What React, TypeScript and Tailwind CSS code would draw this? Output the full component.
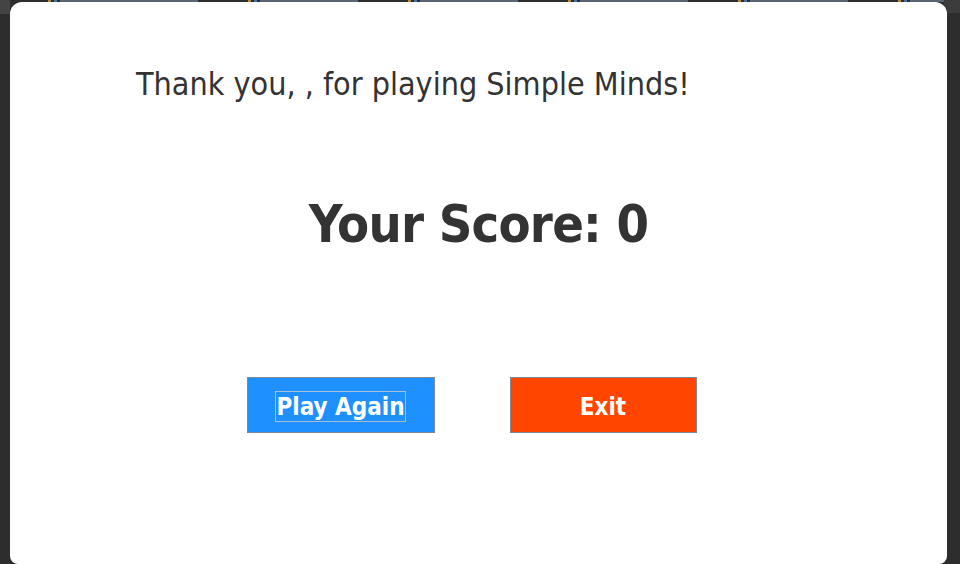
export default function App() {
  const tabs = [
    { x: 'w-[150px]' },
    { x: 'w-[110px]' },
    { x: 'w-[110px]' },
    { x: 'w-[120px]' },
    { x: 'w-[110px]' },
    { x: 'w-[110px]' },
    { x: 'w-[140px]' },
  ];
  return (
    <div className="relative h-[564px] w-[960px] overflow-hidden bg-[#2d2d2d]">
      <div className="absolute left-[48px] top-0 flex h-[3px] gap-[50px]">
        {tabs.map((t, i) => (
          <div key={i} className={`flex h-[3px] items-start gap-[3px] ${t.x}`}>
            <span className="h-[2px] w-[3px] bg-[#b58a3e]" />
            <span className="h-[3px] w-[3px] bg-[#3f74ad]" />
            <span className="h-[2px] flex-1 bg-[#5a6573]" />
          </div>
        ))}
      </div>
      <div className="absolute right-0 top-0 h-[13px] w-[16px] bg-[#3c3c3c]" />
      <div className="absolute left-0 top-0 h-[14px] w-[10px] bg-[#444]" />
      <div className="relative ml-[10px] mt-[2px] h-[562px] w-[937px] rounded-t-[12px] rounded-b-[8px] bg-white font-['DejaVu_Sans_Condensed','DejaVu_Sans',sans-serif] text-[#333333]">
        <div className="flex flex-col">
          <div className="ml-[126px] mt-[63px] text-[32px] leading-[38px]">
            Thank you, , for playing Simple Minds!
          </div>
          <div className="mt-[91px] text-center text-[52px] font-bold leading-[60px] tracking-[-0.8px]">
            Your Score: 0
          </div>
          <div className="mt-[123px] flex justify-center gap-[75px] pr-[14px]">
            <button className="flex h-[56px] w-[188px] items-center justify-center border border-[#7b8a9a] bg-[#1e90ff] text-[24px] font-bold text-white">
              <span className="mt-[2px] border border-[#a9bdd3] pt-[1px] leading-[28px]">Play Again</span>
            </button>
            <button className="flex h-[56px] w-[187px] items-center justify-center border border-[#7b8a9a] bg-[#ff4500] text-[24px] font-bold text-white">
              <span className="mt-[2px] border border-transparent pt-[1px] leading-[28px]">Exit</span>
            </button>
          </div>
        </div>
      </div>
    </div>
  );
}
